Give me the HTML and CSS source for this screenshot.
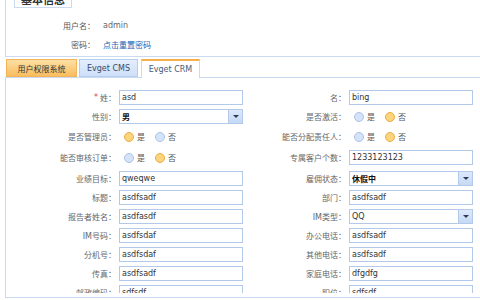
FILE: index.html
```html
<!DOCTYPE html>
<html lang="zh-CN">
<head>
    <meta charset="UTF-8">
    <title>用户信息</title>
    <link rel="stylesheet" href="styles.css">
</head>
<body>
<div class="page">

    <!-- 基本信息 -->
    <fieldset class="info">
        <legend>基本信息</legend>
        <div class="info-row"><span class="info-label">用户名：</span><span class="info-value">admin</span></div>
        <div class="info-row"><span class="info-label">密码：</span><a class="info-link" href="#">点击重置密码</a></div>
    </fieldset>

    <!-- 系统标签 -->
    <div class="tabs">
        <span class="tab tab-orange">用户权限系统</span>
        <span class="tab tab-blue">Evget CMS</span>
        <span class="tab tab-active">Evget CRM</span>
    </div>

    <div class="panel">
        <div class="panel-scroll">
            <div class="form-grid">
                <label class="lbl"><span class="req">*</span> 姓：</label>
                <div class="field"><span class="txt">asd</span></div>
                <label class="lbl">名：</label>
                <div class="field"><span class="txt">bing</span></div>

                <label class="lbl">性别：</label>
                <div class="field select"><span class="txt strong">男</span><span class="drop"></span></div>
                <label class="lbl">是否激活：</label>
                <div class="radios"><span class="radio"></span>是<span class="radio on"></span>否</div>

                <label class="lbl">是否管理员：</label>
                <div class="radios"><span class="radio on"></span>是<span class="radio"></span>否</div>
                <label class="lbl">能否分配责任人：</label>
                <div class="radios"><span class="radio"></span>是<span class="radio on"></span>否</div>

                <label class="lbl">能否审核订单：</label>
                <div class="radios"><span class="radio"></span>是<span class="radio on"></span>否</div>
                <label class="lbl">专属客户个数：</label>
                <div class="field"><span class="txt">1233123123</span></div>

                <label class="lbl">业绩目标：</label>
                <div class="field"><span class="txt">qweqwe</span></div>
                <label class="lbl">雇佣状态：</label>
                <div class="field select"><span class="txt strong">休假中</span><span class="drop"></span></div>

                <label class="lbl">标题：</label>
                <div class="field"><span class="txt">asdfsadf</span></div>
                <label class="lbl">部门：</label>
                <div class="field"><span class="txt">asdfsadf</span></div>

                <label class="lbl">报告者姓名：</label>
                <div class="field"><span class="txt">asdfasdf</span></div>
                <label class="lbl">IM类型：</label>
                <div class="field select"><span class="txt">QQ</span><span class="drop"></span></div>

                <label class="lbl">IM号码：</label>
                <div class="field"><span class="txt">asdfsdaf</span></div>
                <label class="lbl">办公电话：</label>
                <div class="field"><span class="txt">asdfsadf</span></div>

                <label class="lbl">分机号：</label>
                <div class="field"><span class="txt">asdfsdaf</span></div>
                <label class="lbl">其他电话：</label>
                <div class="field"><span class="txt">asdfsadf</span></div>

                <label class="lbl">传真：</label>
                <div class="field"><span class="txt">asdfsadf</span></div>
                <label class="lbl">家庭电话：</label>
                <div class="field"><span class="txt">dfgdfg</span></div>

                <label class="lbl">邮政编码：</label>
                <div class="field"><span class="txt">sdfsdf</span></div>
                <label class="lbl">职位：</label>
                <div class="field"><span class="txt">sdfsdf</span></div>
            </div>
        </div>
    </div>

</div>
</body>
</html>
```

FILE: styles.css
```css
/* página de informações do usuário */
body {
    margin: 0;
    width: 480px;
    height: 300px;
    overflow: hidden;
    background: #fff;
    color: #333;
    font-family: "DejaVu Sans", "Noto Sans CJK SC", sans-serif;
    font-size: 8px;
}
.page {
    width: 520px;
    margin-top: -10px;
}

/* bloco de informações básicas */
.info {
    margin: 0 0 0 5px;
    padding: 8px 0 0 0;
    border: 1px solid #cbdaf0;
    height: 67px;
    box-sizing: border-box;
}
.info legend {
    margin-left: 8px;
    padding: 0 6px;
    border: 1px solid #cbdaf0;
    background: #fff;
    color: #333;
    font-weight: bold;
    font-size: 11px;
}
.info-row {
    display: flex;
    align-items: center;
    height: 19px;
}
.info-label {
    width: 89px;
    text-align: right;
    color: #555;
}
.info-value {
    margin-left: 8px;
    color: #666;
}
.info-link {
    margin-left: 8px;
    color: #2262b6;
    text-decoration: none;
}

/* abas */
.tabs {
    display: flex;
    gap: 2px;
    margin: 2px 0 0 6px;
    position: relative;
    z-index: 1;
}
.tab {
    height: 18px;
    box-sizing: border-box;
    display: flex;
    align-items: center;
    justify-content: center;
    font-size: 8px;
    color: #333;
}
.tab-orange {
    width: 71px;
    border: 1px solid #f2b35a;
    background: linear-gradient(#fde0a6, #f9bd5c);
}
.tab-blue {
    width: 59px;
    margin-right: 1px;
    border: 1px solid #b5cdee;
    background: linear-gradient(#e4eefc, #cddff8);
    color: #3a4a66;
}
.tab-active {
    width: 59px;
    height: 19px;
    margin-bottom: -1px;
    border: 1px solid #cbdaf0;
    border-top: 2px solid #f6b04a;
    border-bottom: none;
    background: #fff;
    color: #4a5a76;
}

/* painel do formulário */
.panel {
    margin-left: 5px;
    border: 1px solid #cbdaf0;
    padding-bottom: 4px;
}
.panel-scroll {
    height: 215px;
    overflow: hidden;
}
.form-grid {
    display: grid;
    grid-template-columns: 113px 124px 106px 124px;
    grid-template-rows: 15px 15px 17px 17px 16px 15px 15px 15px 15px 15px 15px;
    row-gap: 4px;
    padding-top: 12px;
}
.lbl {
    display: flex;
    align-items: center;
    justify-content: flex-end;
    padding-right: 3px;
    color: #666;
    white-space: nowrap;
}
.req {
    color: #e0403a;
    margin-right: 2px;
}
.field {
    display: flex;
    align-items: center;
    height: 15px;
    align-self: center;
    border: 1px solid #b2c9ea;
    box-sizing: border-box;
    background: #fff;
    padding-left: 2px;
}
.txt {
    flex: 1;
    color: #333;
}
.strong {
    color: #111;
    font-weight: bold;
}
.drop {
    width: 13px;
    height: 13px;
    background: linear-gradient(#dde9fa, #c5d9f5);
    border-left: 1px solid #b2c9ea;
    position: relative;
}
.drop::after {
    content: "";
    position: absolute;
    left: 4px;
    top: 5px;
    border-left: 3px solid transparent;
    border-right: 3px solid transparent;
    border-top: 3px solid #2d3c5a;
}

/* botões de rádio */
.radios {
    display: flex;
    align-items: center;
    padding-left: 5px;
    color: #555;
}
.radio {
    width: 8px;
    height: 8px;
    border-radius: 50%;
    border: 1px solid #aac3e8;
    background: #d5e3f8;
    margin-right: 3px;
}
.radio.on {
    border-color: #e9ae46;
    background: #fbd47c;
}
.radios .radio:not(:first-child) {
    margin-left: 10px;
}
```
